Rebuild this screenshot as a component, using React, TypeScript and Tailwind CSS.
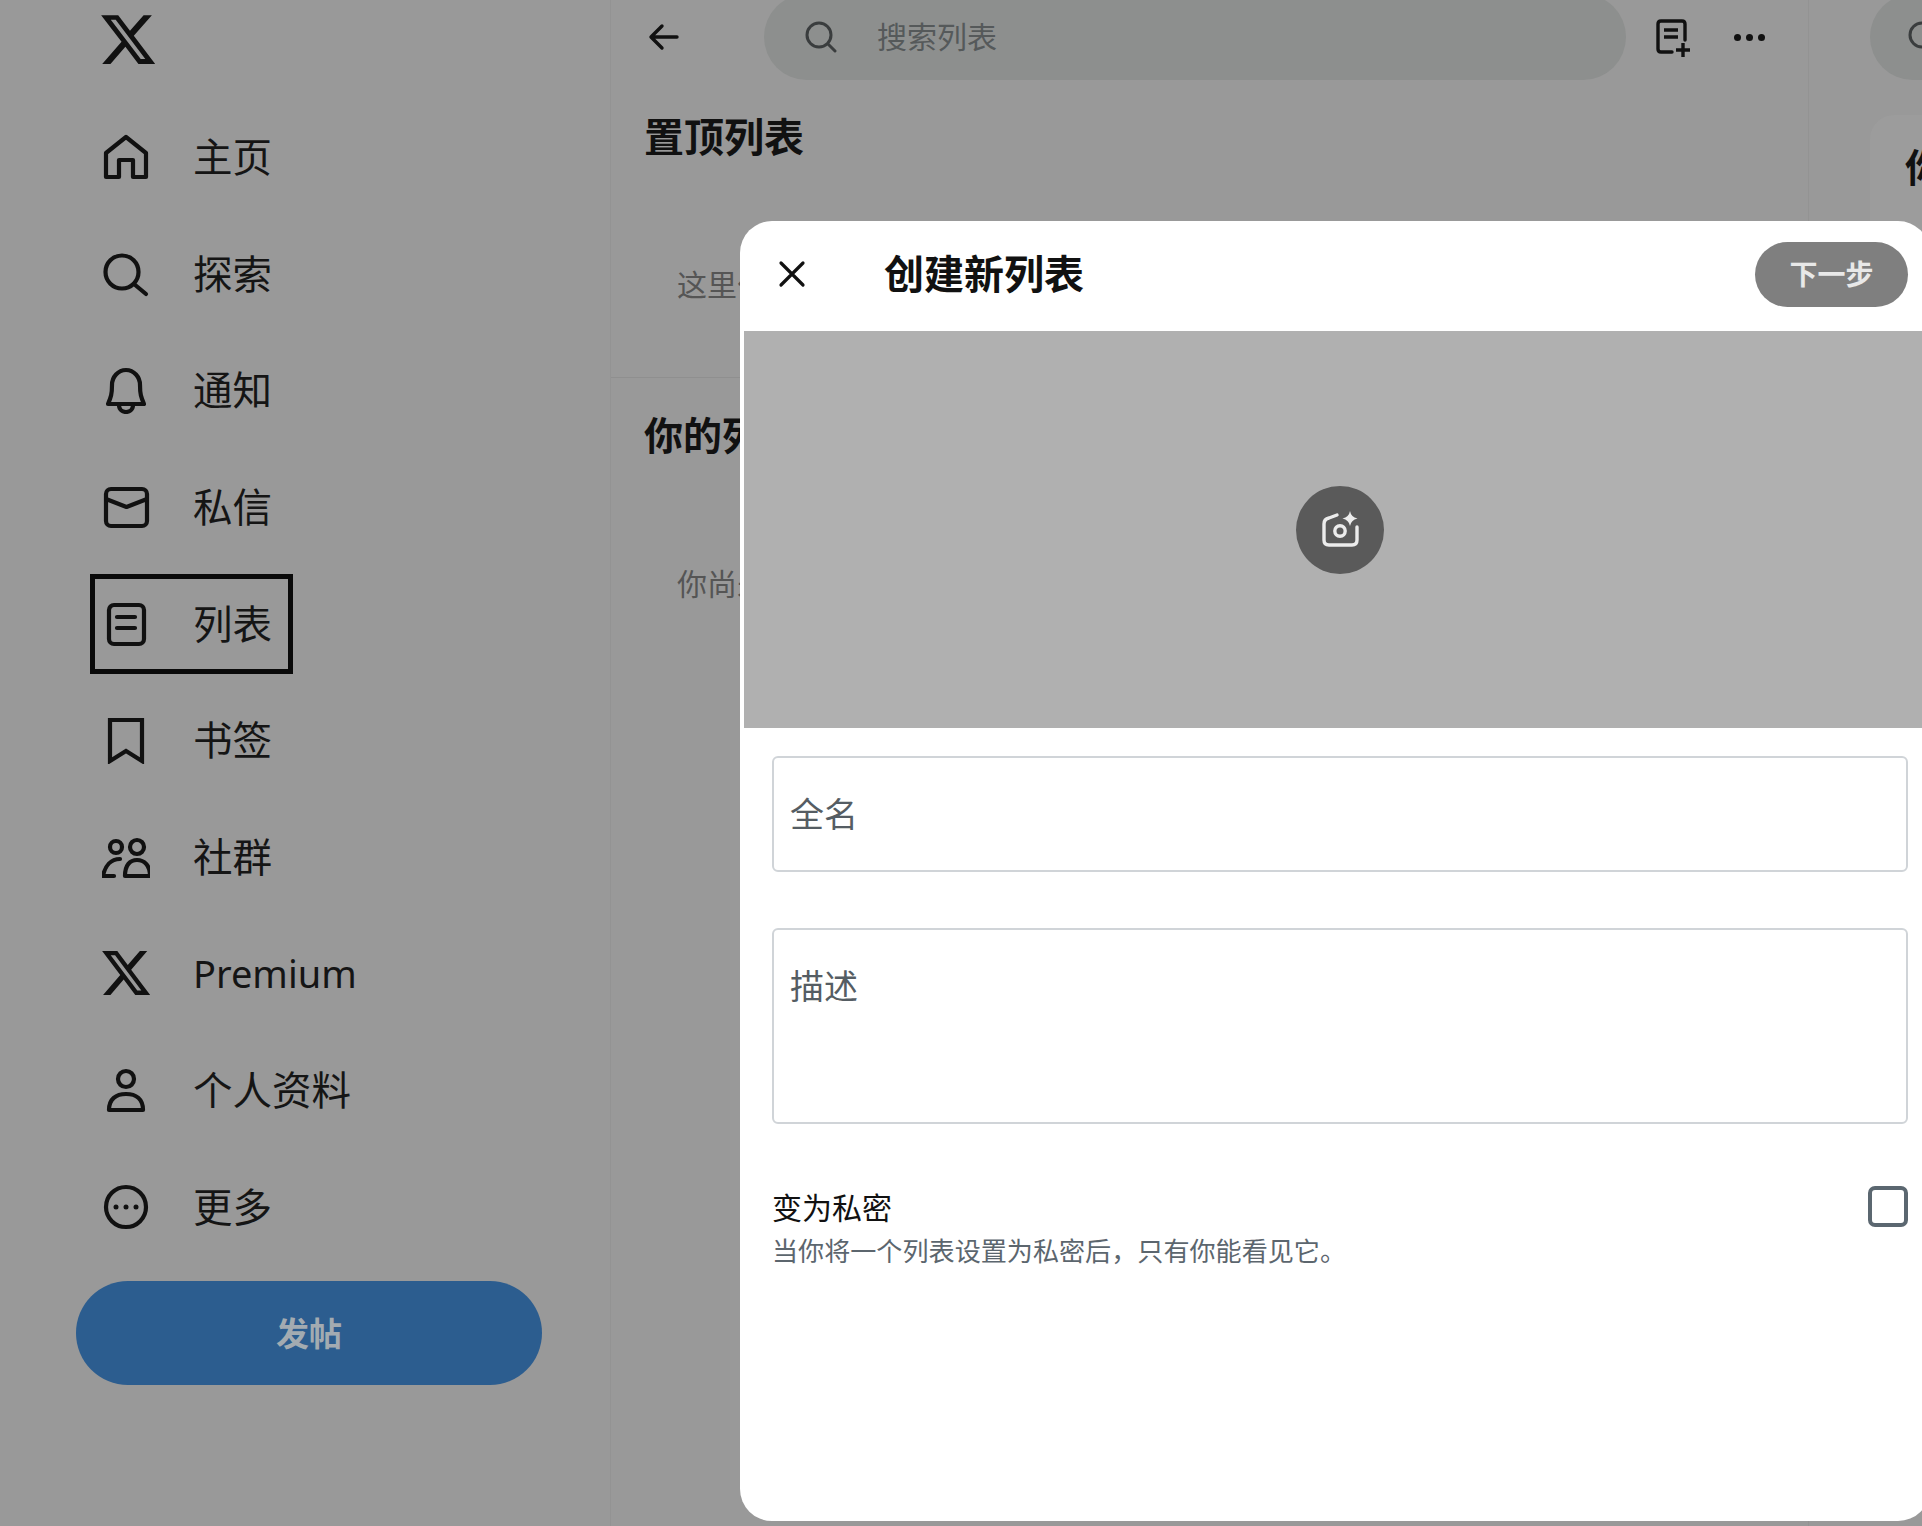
const XLogo = ({ className }: { className: string }) => (
  <svg className={className} viewBox="1.2 2.2 21.6 19.6" preserveAspectRatio="none" fill="#111">
    <path d="M18.244 2.25h3.308l-7.227 8.26 8.502 11.24H16.17l-5.214-6.817L4.99 21.75H1.68l7.73-8.835L1.254 2.25H8.08l4.713 6.231zm-1.161 17.52h1.833L7.084 4.126H5.117z" />
  </svg>
);

type TIconProps = { children: React.ReactNode };

const NavIcon = ({ children }: TIconProps) => (
  <svg
    className="w-12 h-12 shrink-0"
    viewBox="0 0 48 48"
    fill="none"
    stroke="#111"
    strokeWidth="4.2"
    strokeLinejoin="round"
    strokeLinecap="round"
  >
    {children}
  </svg>
);

const navItems: { label: string; icon: React.ReactNode; latin?: boolean; selected?: boolean }[] = [
  {
    label: "主页",
    icon: (
      <NavIcon>
        <path d="M4 44 V20 L24 4 L44 20 V44 H31 V27 H17 V44 Z" />
      </NavIcon>
    ),
  },
  {
    label: "探索",
    icon: (
      <NavIcon>
        <circle cx="20" cy="22" r="16.5" />
        <path d="M32 34 L44 44" />
      </NavIcon>
    ),
  },
  {
    label: "通知",
    icon: (
      <NavIcon>
        <path d="M6 38 C9 31 10 28 10 19 C10 11 16 4 24 4 C32 4 38 11 38 19 C38 28 39 31 42 38 Z" />
        <path d="M17 39 C17 44 21 46 24 46 C27 46 31 44 31 39" />
      </NavIcon>
    ),
  },
  {
    label: "私信",
    icon: (
      <NavIcon>
        <rect x="4" y="6" width="41" height="37" rx="5" />
        <path d="M4 16 L24.5 24 L45 16" />
      </NavIcon>
    ),
  },
  {
    label: "列表",
    selected: true,
    icon: (
      <NavIcon>
        <rect x="7" y="5" width="35" height="39" rx="5" />
        <path d="M15 17 H33 M15 28 H33" />
      </NavIcon>
    ),
  },
  {
    label: "书签",
    icon: (
      <NavIcon>
        <path d="M8 4 H40 V45 L24 35 L8 45 Z" strokeLinejoin="miter" />
      </NavIcon>
    ),
  },
  {
    label: "社群",
    icon: (
      <NavIcon>
        <circle cx="14" cy="14" r="6" />
        <circle cx="35" cy="14" r="7" />
        <path d="M23 43 C23 32 28 27 35 27 C42 27 48 32 48 43 Z" />
        <path d="M18 26 C9 26 3 33 1 43 H12" />
      </NavIcon>
    ),
  },
  {
    label: "Premium",
    latin: true,
    icon: <XLogo className="w-12 h-[44px] shrink-0" />,
  },
  {
    label: "个人资料",
    icon: (
      <NavIcon>
        <circle cx="24" cy="13" r="8" />
        <path d="M7 44 C7 33 14 28 24 28 C34 28 41 33 41 44 Z" />
      </NavIcon>
    ),
  },
  {
    label: "更多",
    icon: (
      <NavIcon>
        <circle cx="24" cy="24" r="20" />
        <circle cx="14" cy="24" r="2.5" fill="#111" stroke="none" />
        <circle cx="24" cy="24" r="2.5" fill="#111" stroke="none" />
        <circle cx="34" cy="24" r="2.5" fill="#111" stroke="none" />
      </NavIcon>
    ),
  },
];

const Sidebar = () => (
  <aside className="w-[611px] shrink-0 border-r border-[#939393] flex flex-col">
    <div className="h-[99px] pl-[101px] pt-[15px]">
      <XLogo className="w-[54px] h-[49px]" />
    </div>
    {navItems.map((item) => (
      <div key={item.label} className="h-[116.6px] flex items-center">
        <div
          className={`ml-[90px] w-[203px] h-[100px] pl-[7px] flex items-center gap-[43px] border-[5px] whitespace-nowrap ${
            item.selected ? "border-[#0a0a0a]" : "border-transparent"
          }`}
        >
          {item.icon}
          <span
            className={`text-[#151515] ${
              item.latin
                ? "font-['Noto_Sans',sans-serif] text-[38px]"
                : "text-[39.5px] pb-[5px]"
            }`}
          >
            {item.label}
          </span>
        </div>
      </div>
    ))}
    <div className="mt-[16px] ml-[76px] w-[466px] h-[104px] rounded-full bg-[#2c5d8f] flex items-center justify-center text-[33px] font-bold text-[#a3abb1]">
      发帖
    </div>
  </aside>
);

const MainColumn = () => (
  <main className="w-[1198px] shrink-0 border-r border-[#939393]">
    <div className="h-[80px] flex items-center">
      <svg
        className="ml-[37px] w-8 h-8 -mt-[6px]"
        viewBox="0 0 32 32"
        fill="none"
        stroke="#111"
        strokeWidth="3.4"
        strokeLinecap="round"
        strokeLinejoin="round"
      >
        <path d="M29 16 H4 M14 5 L3 16 L14 27" />
      </svg>
      <div className="ml-[84px] -mt-[6px] w-[862px] h-[86px] rounded-full bg-[#8d8f8e] flex items-center pl-[41px]">
        <svg
          className="w-8 h-8 shrink-0"
          viewBox="0 0 32 32"
          fill="none"
          stroke="#3a3d3e"
          strokeWidth="3"
          strokeLinecap="round"
        >
          <circle cx="14" cy="14" r="12" />
          <path d="M23 23 L30 30" />
        </svg>
        <span className="ml-[40px] pb-[3px] text-[30px] text-[#55595a]">搜索列表</span>
      </div>
      <svg
        className="ml-[29px] w-9 h-10 -mt-[6px]"
        viewBox="0 0 36 40"
        fill="none"
        stroke="#111"
        strokeWidth="3.4"
        strokeLinecap="round"
      >
        <path d="M30 23 V7 Q30 4 27 4 H6 Q3 4 3 7 V32 Q3 35 6 35 H17" />
        <path d="M9 13 H23 M9 20 H23" strokeWidth="3.6" strokeLinecap="butt" />
        <path d="M28 26 V40 M21 33 H35" strokeLinecap="butt" />
      </svg>
      <div className="ml-[43px] -mt-[6px] flex gap-[5px]">
        <span className="w-[7px] h-[7px] rounded-full bg-[#111]" />
        <span className="w-[7px] h-[7px] rounded-full bg-[#111]" />
        <span className="w-[7px] h-[7px] rounded-full bg-[#111]" />
      </div>
    </div>
    <section className="h-[298px] border-b border-[#8f8f8f] pl-[33px] pt-[27px]">
      <h2 className="text-[40px] leading-[56px] font-bold text-[#111]">置顶列表</h2>
      <p className="mt-[100px] pl-[33px] text-[30px] leading-[40px] text-[#555]">
        这里什么都没有
      </p>
    </section>
    <section className="pl-[33px] pt-[27px]">
      <h2 className="text-[39px] leading-[56px] font-bold text-[#111]">你的列表</h2>
      <p className="mt-[101px] pl-[33px] text-[30px] leading-[40px] text-[#555]">
        你尚未创建任何列表
      </p>
    </section>
  </main>
);

const RightColumn = () => (
  <div className="flex-1 min-w-0 pl-[61px]">
    <div className="-mt-[6px] h-[86px] w-[200px] rounded-l-full bg-[#8d8f8e] flex items-center pl-[38px]">
      <svg
        className="w-8 h-8 shrink-0"
        viewBox="0 0 32 32"
        fill="none"
        stroke="#3a3d3e"
        strokeWidth="3"
      >
        <circle cx="14" cy="14" r="12" />
      </svg>
    </div>
    <div className="mt-[35px] w-[200px] h-[300px] rounded-l-[24px] bg-[#9c9c9c] pl-[35px] pt-[22px]">
      <p className="text-[39px] leading-[56px] font-bold text-[#111] whitespace-nowrap">
        你可能会喜欢
      </p>
    </div>
  </div>
);

const CreateListModal = () => (
  <div className="absolute left-[740px] top-[221px] w-[1190px] h-[1300px] rounded-[32px] bg-white overflow-hidden">
    <div className="h-[110px] pb-[4px] flex items-center">
      <svg
        className="ml-[38px] w-7 h-7"
        viewBox="0 0 28 28"
        fill="none"
        stroke="#111"
        strokeWidth="3.2"
        strokeLinecap="round"
      >
        <path d="M3 3 L25 25 M25 3 L3 25" />
      </svg>
      <h1 className="ml-[78px] pb-[4px] text-[40px] font-bold text-[#111]">创建新列表</h1>
      <div className="ml-auto mr-[22px] w-[153px] h-[65px] rounded-full bg-[#7f7f7f] flex items-center justify-center pb-[2px] text-[28px] font-bold text-[#e8e8e8]">
        下一步
      </div>
    </div>
    <div className="ml-[4px] h-[397px] pl-[6px] bg-[#b0b0b0] flex items-center justify-center">
      <div className="w-[88px] h-[88px] rounded-full bg-[#5a5a5a] flex items-center justify-center">
        <svg
          className="w-10 h-10"
          viewBox="0 0 40 40"
          fill="none"
          stroke="#ececec"
          strokeWidth="3.4"
          strokeLinecap="round"
          strokeLinejoin="round"
        >
          <path d="M17 5 L9 8 Q4 9 4 14 V30 Q4 35 9 35 H32 Q37 35 37 30 V17" />
          <circle cx="20" cy="21" r="5.2" />
          <path
            d="M30 1 Q31 7 37.5 8.5 Q31 10 30 16 Q29 10 22.5 8.5 Q29 7 30 1 Z"
            fill="#ececec"
            stroke="none"
          />
        </svg>
      </div>
    </div>
    <div className="ml-[32px] mr-[22px]">
      <div className="mt-[28px] h-[116px] rounded-[6px] border-2 border-[#d0d4d8] pl-[16px] pb-[4px] flex items-center text-[34px] text-[#555d63]">
        全名
      </div>
      <div className="mt-[56px] h-[196px] rounded-[6px] border-2 border-[#d0d4d8] pl-[16px] pt-[31px] text-[34px] leading-[48px] text-[#555d63]">
        描述
      </div>
      <div className="mt-[62px] flex justify-between">
        <div>
          <p className="text-[30px] leading-[40px] text-[#111]">变为私密</p>
          <p className="mt-[6px] text-[26.1px] leading-[36px] text-[#5c666e]">
            当你将一个列表设置为私密后，只有你能看见它。
          </p>
        </div>
        <div className="w-[40px] h-[41px] rounded-[7px] border-[4px] border-[#5b6770]" />
      </div>
    </div>
  </div>
);

export default function App() {
  return (
    <div className="relative w-[1922px] h-[1526px] overflow-hidden bg-[#999999] flex font-['Noto_Sans_CJK_SC','Noto_Sans',sans-serif]">
      <Sidebar />
      <MainColumn />
      <RightColumn />
      <CreateListModal />
    </div>
  );
}
